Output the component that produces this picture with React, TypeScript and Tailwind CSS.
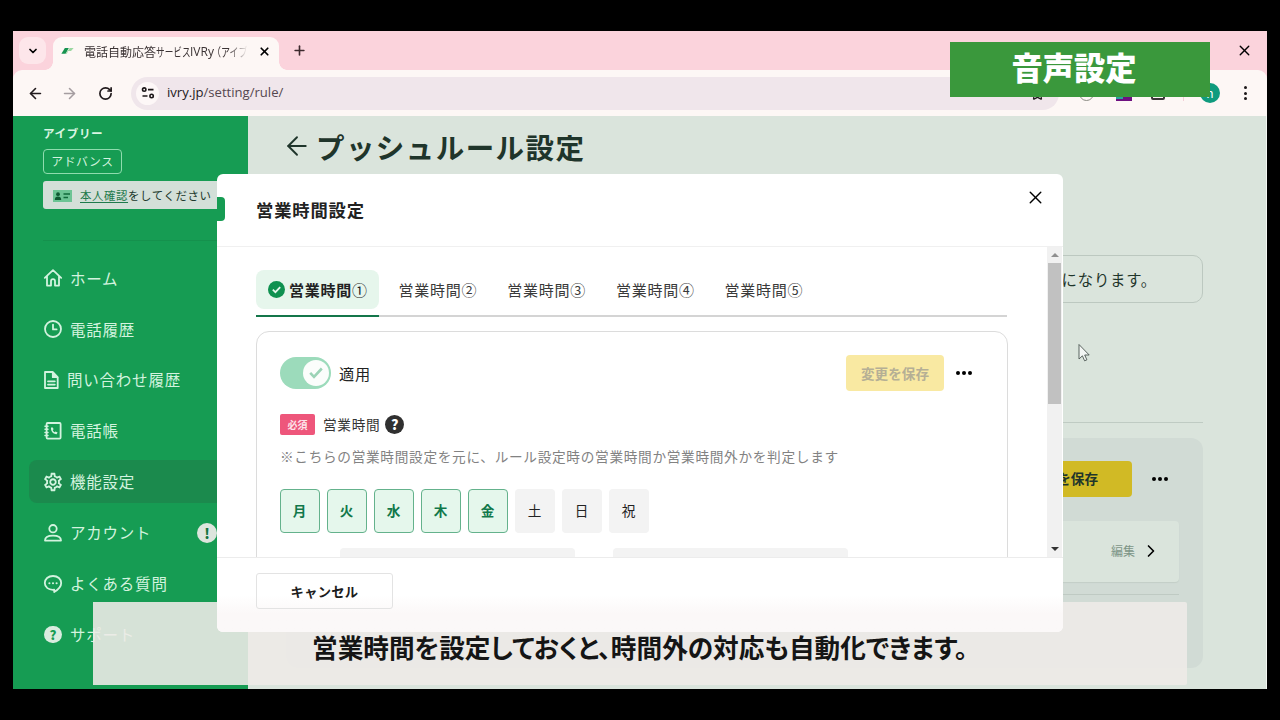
import type { ReactNode } from 'react'
import clsx from 'clsx'
import { MdOutlineSettings } from 'react-icons/md'
import { ArrowLeft, ArrowRight, ChevronDown, ChevronRight, Plus, RotateCw, Star, X } from 'lucide-react'

interface NavItem {
  label: string
  icon: ReactNode
  active?: boolean
  alert?: boolean
}

function LineIcon({ children }: { children: ReactNode }) {
  return (
    <svg
      viewBox="0 0 20 20"
      fill="none"
      stroke="currentColor"
      strokeWidth="1.8"
      strokeLinejoin="round"
      strokeLinecap="round"
      className="size-5 shrink-0"
    >
      {children}
    </svg>
  )
}

const navItems: NavItem[] = [
  {
    label: 'ホーム',
    icon: (
      <LineIcon>
        <path d="M1.8 9.8 10 2.2l8.2 7.6M4 8v9.6h4v-4.4a2 2 0 0 1 4 0v4.4h4V8" />
      </LineIcon>
    ),
  },
  {
    label: '電話履歴',
    icon: (
      <LineIcon>
        <circle cx="10" cy="10" r="8" />
        <path d="M10 5.6v4.8h3.6" />
      </LineIcon>
    ),
  },
  {
    label: '問い合わせ履歴',
    icon: (
      <svg
        viewBox="0 0 17 20"
        fill="none"
        stroke="currentColor"
        strokeWidth="1.8"
        strokeLinejoin="round"
        strokeLinecap="round"
        className="h-5 w-[17px] shrink-0"
      >
        <path d="M2 2h7.5l5.2 5.4V18H2z" />
        <path d="M9.8 2.2v5h4.6z" fill="currentColor" />
        <path d="M5 11.3h6.8M5 14.6h6.8" />
      </svg>
    ),
  },
  {
    label: '電話帳',
    icon: (
      <LineIcon>
        <rect x="3.6" y="2" width="14" height="15.6" rx="1" />
        <path d="M2 5.2h3M2 8.3h3M2 11.4h3M2 14.5h3" strokeWidth="1.5" />
        <path
          d="M8 6.6c-.4 3.6 1.8 6.4 5.6 6.7l1-1.7-2-1.1-1 .8c-.9-.4-1.6-1.3-1.8-2.2l.8-.9-.8-1.8z"
          fill="currentColor"
          stroke="none"
        />
      </LineIcon>
    ),
  },
  { label: '機能設定', icon: <MdOutlineSettings className="-mx-px size-[22px] shrink-0" />, active: true },
  {
    label: 'アカウント',
    icon: (
      <LineIcon>
        <circle cx="10" cy="5.7" r="3.7" />
        <path d="M2 17.6c0-3.4 2.4-5 8-5s8 1.6 8 5z" />
      </LineIcon>
    ),
    alert: true,
  },
  {
    label: 'よくある質問',
    icon: (
      <LineIcon>
        <path d="M10 2c4.800 0 8.200 3 8.200 7 0 4.200-3.600 7-7 9v-2.300C5.500 16.300 1.800 13.200 1.800 9c0-4 3.400-7 8.200-7z" />
        <path d="M6.400 9.200h.01M10 9.200h.01M13.600 9.200h.01" strokeWidth="2.1" />
      </LineIcon>
    ),
  },
  {
    label: 'サポート',
    icon: (
      <span className="flex size-5 shrink-0 items-center justify-center">
        <span className="flex size-[17.5px] items-center justify-center rounded-full bg-[#d9ecdf] text-[13px] leading-none font-black tracking-normal text-[#169c53]">
          ?
        </span>
      </span>
    ),
  },
]

const days = [
  { label: '月', on: true },
  { label: '火', on: true },
  { label: '水', on: true },
  { label: '木', on: true },
  { label: '金', on: true },
  { label: '土', on: false },
  { label: '日', on: false },
  { label: '祝', on: false },
]

function Dots({ className }: { className?: string }) {
  return (
    <span className={clsx('flex gap-[2px]', className)}>
      <span className="size-1 rounded-full bg-black" />
      <span className="size-1 rounded-full bg-black" />
      <span className="size-1 rounded-full bg-black" />
    </span>
  )
}

function TabStrip() {
  return (
    <div className="flex h-[39px] shrink-0 items-end bg-[#fbd3dc] pl-[6px]">
      <button className="mb-[6px] flex size-[27px] items-center justify-center rounded-[9px] bg-[#fde6ea]">
        <ChevronDown className="size-3 text-black" strokeWidth={3.5} />
      </button>
      <span className="-ml-px size-2 bg-[radial-gradient(circle_at_0_0,transparent_7.5px,#fdf7f5_8px)]" />
      <div className="flex h-[33px] w-[226px] items-center rounded-t-[9px] bg-[#fdf7f5] pb-[5px] pl-[8px]">
        <svg viewBox="0 0 14 8" className="h-[7px] w-[13px] shrink-0">
          <path d="M4 0h4.500L4.800 6.500H0z" fill="#16934f" />
          <path d="M9.500 0H14l-3 3.500H7.800l-1.600 3H5z" fill="#9ad7a0" />
        </svg>
        <span className="mt-px ml-[10px] flex w-[164px] shrink-0 text-[12px] leading-[18px] whitespace-nowrap text-[#3b3334] [mask-image:linear-gradient(to_right,#000_88%,transparent)]">
          <span>電話自動応答</span>
          <span className="w-[34px] origin-left scale-x-[0.72]">サービス</span>
          <span className="w-[22px] font-['Open_Sans']">IVRy</span>
          <span className="w-[36px] origin-left scale-x-75">（アイブ</span>
        </span>
        <X className="ml-[10px] size-[13px] shrink-0 text-black" strokeWidth={3.2} />
      </div>
      <span className="size-2 bg-[radial-gradient(circle_at_100%_0,transparent_7.5px,#fdf7f5_8px)]" />
      <Plus className="mb-[12px] ml-[5px] size-[15px] text-[#3d2a2e]" strokeWidth={2.6} />
      <X className="mr-[14px] mb-[11px] ml-auto size-[17px] text-black" strokeWidth={1.9} />
    </div>
  )
}

function Toolbar() {
  return (
    <div className="shrink-0 bg-[#fbd3dc]">
      <div className="flex h-[46px] items-center rounded-t-[9px] bg-[#fdf7f5] text-[#211a1c]">
        <ArrowLeft className="ml-[14px] size-[17px]" strokeWidth={2.3} />
        <ArrowRight className="ml-[17px] size-[17px] text-[#a59da0]" strokeWidth={2.2} />
        <RotateCw className="ml-[20px] size-[15px]" strokeWidth={2.7} />
        <div className="ml-[18px] flex h-[33px] w-[928px] items-center rounded-full bg-[#f0e6eb] pl-[5px]">
          <span className="flex size-[23px] items-center justify-center rounded-full bg-[#fdf7f7]">
            <svg viewBox="0 0 14 12" fill="none" stroke="#1c1719" strokeWidth="1.6" className="h-3 w-[14px]">
              <circle cx="3.2" cy="2.6" r="1.7" />
              <path d="M7 2.6h5.500M1.500 9h5" />
              <circle cx="10.6" cy="9" r="1.7" />
            </svg>
          </span>
          <span className="ml-2 font-['Open_Sans'] text-[13.1px] text-[#55474f]">
            <span className="text-[#1d181b]">ivry.jp</span>/setting/rule/
          </span>
          <Star className="mr-[14px] ml-auto size-[15px]" />
        </div>
        <span className="ml-[20px] size-[15px] rounded-full border border-[#8c8c84]" />
        <span className="ml-[22px] h-4 w-4 border-r-[9px] border-b-[2px] border-[#6e1080] bg-[#27a69a]" />
        <span className="ml-[19px] h-[13px] w-[14px] rounded-[2px] border-2 border-[#3b3437]" />
        <span className="ml-[18px] h-4 w-px bg-[#f3cfd6]" />
        <span className="ml-[16px] flex size-5 items-center justify-center rounded-full bg-[#0f9b7e] text-[12px] text-white">
          n
        </span>
        <span className="ml-[24px] flex flex-col gap-[2.5px]">
          <span className="size-[3px] rounded-full bg-[#1c1719]" />
          <span className="size-[3px] rounded-full bg-[#1c1719]" />
          <span className="size-[3px] rounded-full bg-[#1c1719]" />
        </span>
      </div>
    </div>
  )
}

function Sidebar() {
  return (
    <aside className="flex w-[235px] shrink-0 flex-col bg-[#169c53] text-[#d3f3df]">
      <div className="flex flex-col items-start pl-[30px]">
        <p className="mt-[8px] text-[11.6px] leading-[18px] font-bold tracking-[0.05em] text-[#d8f5e2]">アイブリー</p>
        <span className="mt-[7px] flex h-[25px] w-[79px] items-center justify-center rounded-[4px] border border-[#8fdcae] pb-px text-[11.8px] tracking-[0.05em]">
          アドバンス
        </span>
        <div className="mt-[7px] flex h-[28px] w-[182px] items-center rounded-[3px] bg-[#d3dfd8] pt-px pl-[10px] text-[11.45px] tracking-[0.05em] text-[#20382c]">
          <svg viewBox="0 0 19 12" className="h-3 w-[19px]">
            <rect width="19" height="12" fill="#6cc494" />
            <circle cx="5" cy="4.2" r="1.9" fill="#0f5a33" />
            <path d="M1.800 10c0-2.600 1.200-3.600 3.200-3.600S8.200 7.400 8.200 10z" fill="#0f5a33" />
            <path d="M10.500 4h6.500M10.500 7.500h4.500" stroke="#0f6a3a" strokeWidth="1.4" />
          </svg>
          <span className="ml-2 whitespace-nowrap">
            <span className="text-[#1f7a4c] underline underline-offset-2">本人確認</span>をしてください
          </span>
        </div>
      </div>
      <div className="mt-[31px] ml-[30px] h-px bg-[#15914d]" />
      <nav className="mt-4 ml-4 flex flex-col gap-2 text-[15.5px] tracking-[0.05em]">
        {navItems.map((item) => (
          <div
            key={item.label}
            className={clsx('flex h-[42.86px] items-center rounded-l-[8px] pl-[14px]', item.active && 'bg-[#1b8a4d]')}
          >
            {item.icon}
            <span className="ml-[7px] leading-none">{item.label}</span>
            {item.alert && (
              <span className="mr-[31px] ml-auto flex size-5 items-center justify-center rounded-full bg-[#dde5dd] text-[14px] leading-none font-black tracking-normal text-[#14743e]">
                !
              </span>
            )}
          </div>
        ))}
      </nav>
    </aside>
  )
}

function RulePage() {
  return (
    <main className="flex grow flex-col bg-[#dae4dc] pr-[63px] pl-[38px] text-[#1f352b]">
      <div className="mt-[9px] flex h-[44px] items-center">
        <ArrowLeft className="-mt-[3px] -ml-[4px] size-[30px]" strokeWidth={1.5} />
        <h1 className="ml-[4px] text-[28.5px] leading-none font-bold tracking-[0.05em]">プッシュルール設定</h1>
      </div>
      <div className="mt-[86px] flex h-[48px] items-center justify-end rounded-[10px] border border-[#bcc8c0] pt-px pr-[45px] text-[15.4px] tracking-[0.05em]">
        設定内容は保存後に有効になります。
      </div>
      <div className="mt-[119px] h-px bg-[#bfcbc3]" />
      <section className="mt-[15px] flex h-[230px] flex-col rounded-[12px] bg-[#d1dbd5] pr-[24px] pl-[24px]">
        <div className="mt-[23px] flex items-center justify-end">
          <button className="flex h-[36px] w-[136px] items-center justify-center rounded-[4px] bg-[#d1ba25] pb-px text-[13.6px] font-bold">
            変更を保存
          </button>
          <Dots className="mr-[11px] ml-5" />
        </div>
        <div className="mt-[24px] flex h-[61px] items-center justify-end rounded-[4px] bg-[#dae4dc] pr-[18px] pb-px text-[12px] text-[#7d9587] shadow-[0_1px_1px_#c3cec7]">
          編集
          <ChevronRight className="ml-[6px] size-[20px] text-black" strokeWidth={2} />
        </div>
        <div className="mt-[12px] h-px bg-[#bfcac3]" />
      </section>
    </main>
  )
}

function HoursDialog() {
  return (
    <div role="dialog" className="absolute top-[143px] left-[204px] flex h-[458px] w-[846px] flex-col rounded-[6px] bg-white">
      <header className="flex h-[72px] shrink-0 items-center justify-between pr-[17px] pl-[39px]">
        <h2 className="text-[17.3px] font-bold tracking-[0.05em] text-[#222]">営業時間設定</h2>
        <X className="mb-[25px] size-[21px] text-black" strokeWidth={1.6} />
      </header>
      <div className="flex h-[311px] shrink-0 overflow-hidden border-t border-[#f0f0f0]">
        <div className="w-[791px] pt-[23px] pl-[39px]">
          <div className="flex h-[47px] w-[751px] items-start border-b-2 border-[#d4d4d4] text-[15px] tracking-[0.05em] text-[#3a3a3a]">
            <div className="h-[47px] border-b-2 border-[#14764a]">
              <div className="flex h-[39px] w-[123px] items-center rounded-[8px] bg-[#e6f6ec] pl-[12px] font-bold text-[#222]">
                <svg viewBox="0 0 17 17" className="mr-[4px] size-[17px] shrink-0">
                  <circle cx="8.5" cy="8.5" r="8.5" fill="#0f9150" />
                  <path d="m4.800 8.700 2.600 2.500 4.800-5" fill="none" stroke="#e6f6ec" strokeWidth="1.8" />
                </svg>
                <span className="pt-[2px] whitespace-nowrap">
                  営業時間<span className="font-normal">①</span>
                </span>
              </div>
            </div>
            {['②', '③', '④', '⑤'].map((n) => (
              <div key={n} className="flex h-[39px] w-[108.7px] items-center pt-[2px] pl-[19.5px] whitespace-nowrap">
                営業時間{n}
              </div>
            ))}
          </div>
          <div className="mt-[14px] h-[300px] w-[752px] rounded-[13px] border border-[#dcdcdc] px-[23px] pt-[23px]">
            <div className="flex h-[36px] items-center">
              <span className="flex h-[32px] w-[51px] items-center justify-end rounded-full bg-[#9cdbbb] pr-[2px]">
                <span className="flex size-[26px] items-center justify-center rounded-full bg-[#fbfdfb]">
                  <svg viewBox="0 0 14 12" fill="none" stroke="#9cd3b6" strokeWidth="2.6" className="h-3 w-[14px]">
                    <path d="m1.200 5.800 3.800 4L12.800 1.500" />
                  </svg>
                </span>
              </span>
              <span className="ml-2 text-[15.2px] tracking-[0.05em] text-[#222]">適用</span>
              <button className="ml-auto flex h-[36px] w-[98px] items-center justify-center rounded-[4px] bg-[#f9e9a2] text-[13.6px] font-bold text-[#b5af95]">
                変更を保存
              </button>
              <Dots className="mr-[12px] ml-3" />
            </div>
            <div className="mt-[22px] flex h-[22px] items-center">
              <span className="flex h-[21px] w-[35px] items-center justify-center rounded-[2px] bg-[#ee567b] text-[10px] font-bold text-[#fde3ea]">
                必須
              </span>
              <span className="ml-2 text-[13.65px] tracking-[0.05em] text-[#333]">営業時間</span>
              <span className="ml-[5px] flex size-[19px] items-center justify-center rounded-full bg-[#303030] text-[14px] leading-none font-black text-white">
                ?
              </span>
            </div>
            <p className="mt-[11px] text-[13.66px] leading-[20px] tracking-[0.05em] whitespace-nowrap text-[#828282]">
              ※こちらの営業時間設定を元に、ルール設定時の営業時間か営業時間外かを判定します
            </p>
            <div className="mt-[23px] flex gap-[7px]">
              {days.map((d) => (
                <span
                  key={d.label}
                  className={clsx(
                    'flex h-[44px] w-10 items-center justify-center rounded-[4px] pr-px pb-px text-[13.6px]',
                    d.on ? 'border border-[#64b28c] bg-[#e5f7ec] font-bold text-[#11784a]' : 'bg-[#f3f3f3] text-[#222]',
                  )}
                >
                  {d.label}
                </span>
              ))}
            </div>
            <div className="mt-[15px] ml-[60px] flex gap-[38px]">
              <span className="h-9 w-[235px] rounded-[4px] bg-[#f3f3f3]" />
              <span className="h-9 w-[235px] rounded-[4px] bg-[#f3f3f3]" />
            </div>
          </div>
        </div>
        <div className="ml-[39px] flex w-[15px] flex-col items-center bg-[#f1f1f1]">
          <span className="mt-[6px] border-x-4 border-b-4 border-x-transparent border-b-[#8f8f8f]" />
          <span className="mt-[6px] h-[141px] w-[13px] bg-[#c1c1c1]" />
          <span className="mt-auto mb-[6px] border-x-4 border-t-4 border-x-transparent border-t-[#333]" />
        </div>
      </div>
      <footer className="grow rounded-b-[6px] border-t border-[#ececec] bg-linear-to-b from-white from-50% to-[#fbf8f8] to-75% pt-[15px] pl-[39px]">
        <button className="flex h-[36px] w-[137px] items-center justify-center rounded-[3px] border border-[#e3e3e3] pt-px text-[13.3px] font-bold tracking-[0.02em] text-[#1c1c1c]">
          キャンセル
        </button>
      </footer>
      <span className="absolute top-[23px] left-0 h-6 w-2 rounded-r-[4px] bg-[#169c53]" />
    </div>
  )
}

export default function App() {
  return (
    <div className="h-[720px] w-[1280px] overflow-hidden bg-black px-[13px] pt-[31px] font-['Noto_Sans_CJK_JP',sans-serif]">
      <div className="relative flex h-[658px] w-[1254px] flex-col overflow-hidden">
        <TabStrip />
        <Toolbar />
        <div className="flex min-h-0 grow overflow-hidden border-r border-[#f3f6f3]">
          <Sidebar />
          <RulePage />
        </div>
        <div className="absolute top-[571px] left-[80px] h-[83px] w-[1094px] rounded-r-[2px] bg-[#eeebe7]/89" />
        <HoursDialog />
        <p className="absolute top-[597px] left-[299px] text-[25.65px] leading-[38px] font-bold whitespace-nowrap text-[#151515] [font-feature-settings:'palt']">
          営業時間を設定しておくと、時間外の対応も自動化できます。
        </p>
        <div className="absolute top-[11px] left-[937px] flex h-[55px] w-[260px] items-center justify-center bg-[#3a983c] pr-[12px] pb-[5px] text-[31.3px] leading-none font-black text-white">
          音声設定
        </div>
        <svg viewBox="0 0 12 18" className="absolute top-[312px] left-[1065px] h-[19px] w-3">
          <path d="M1 1v14.500l3.400-3.200 2.200 5 2.300-1-2.200-4.800h4.500z" fill="#f3f6f4" stroke="#4b5550" strokeWidth=".9" />
        </svg>
      </div>
    </div>
  )
}
